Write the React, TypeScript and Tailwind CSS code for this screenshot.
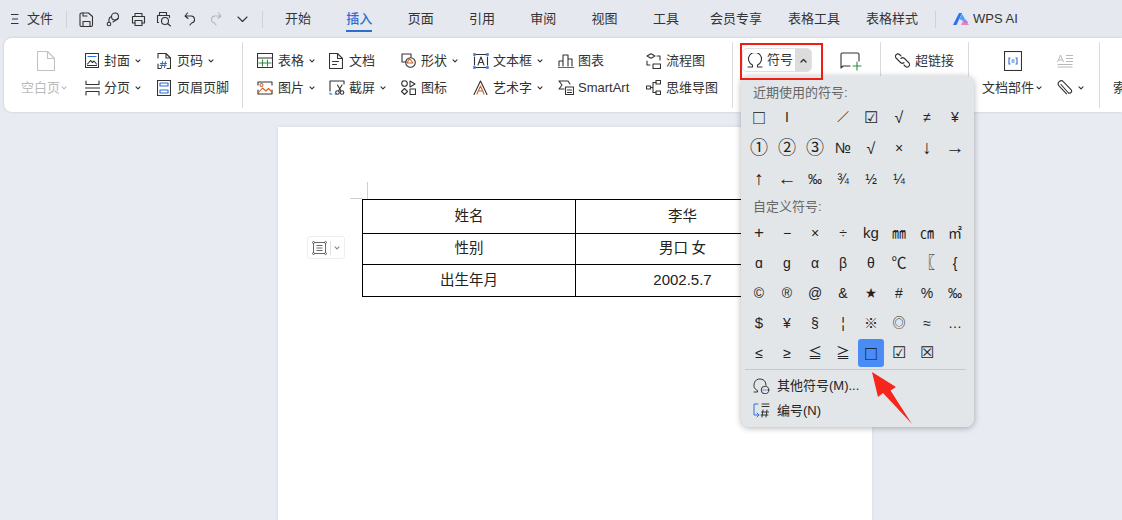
import React from "react";

const S = { fill: "none", stroke: "#333", strokeWidth: 1.1, strokeLinecap: "round", strokeLinejoin: "round" } as const;
const BLUE = "#2f6fd8";

function Ico({ w = 16, h = 16, vb, children, className = "" }: { w?: number; h?: number; vb?: string; children: React.ReactNode; className?: string }) {
  return (
    <svg width={w} height={h} viewBox={vb ?? `0 0 ${w} ${h}`} {...S} className={`shrink-0 ${className}`}>
      {children}
    </svg>
  );
}

function Chev({ color = "#333" }: { color?: string }) {
  return (
    <svg width="6" height="4" viewBox="0 0 7 5" fill="none" stroke={color} strokeWidth="1.4" strokeLinecap="round" strokeLinejoin="round" className="shrink-0">
      <path d="M1 1l2.500 2.500L6 1" />
    </svg>
  );
}

function Item({ icon, label, chev, iconW = 20 }: { icon: React.ReactNode; label: string; chev?: boolean; iconW?: number }) {
  return (
    <div className="h-[27px] flex items-center whitespace-nowrap">
      <div className="flex items-center" style={{ width: iconW }}>{icon}</div>
      <span>{label}</span>
      {chev && <span className="ml-[5px] flex"><Chev /></span>}
    </div>
  );
}

function Col({ w, children }: { w: string; children: React.ReactNode }) {
  return <div className={`flex flex-col shrink-0 ${w}`}>{children}</div>;
}

function Divider() {
  return <div className="w-px h-[66px] bg-[#d9dadd] shrink-0 -mt-[5px]" />;
}

const tabs = ["开始", "插入", "页面", "引用", "审阅", "视图", "工具"];
const recent = ["□", "I", "", "／", "☑", "√", "≠", "¥", "①", "②", "③", "№", "√", "×", "↓", "→", "↑", "←", "‰", "¾", "½", "¼"];
const custom = ["+", "−", "×", "÷", "kg", "㎜", "㎝", "㎡", "ɑ", "ɡ", "α", "β", "θ", "℃", "〖", "{", "©", "®", "@", "&", "★", "#", "%", "‰", "$", "¥", "§", "¦", "※", "◎", "≈", "…", "≤", "≥", "≦", "≧", "□", "☑", "☒"];

const sizes: Record<string, string> = {
  "□": "text-[14px] font-bold text-[#111] font-['Noto_Sans_CJK_SC']",
  "①": "text-[18px]",
  "②": "text-[18px]",
  "③": "text-[18px]",
  "↓": "text-[19px]",
  "↑": "text-[19px]",
  "→": "text-[19px]",
  "←": "text-[19px]",
  "√": "text-[16px]",
  "／": "text-[12px]",
  "★": "text-[11px]",
  "☑": "text-[16px]",
  "☒": "text-[16px]",
  "〖": "text-[16px] font-bold",
  "℃": "text-[15px]",
  "◎": "text-[13px]",
  "+": "text-[17px]",
  "kg": "text-[15px]",
  "$": "text-[15px]",
  "№": "text-[15px]",
};

function Sym({ s, on }: { s: string; on?: boolean }) {
  return (
    <div className={`w-[28px] h-full flex items-center justify-center ${on ? "relative" : ""}`}>
      {on && <div className="absolute left-[1px] top-[1px] w-[26px] h-[28px] rounded-[3px] bg-[#4a8cf5]" />}
      <span className={`relative ${sizes[s] ?? ""}`}>{s}</span>
    </div>
  );
}

export default function App() {
  return (
    <div className="relative w-[1122px] h-[520px] overflow-hidden bg-[#e8ebf2] text-[#333] text-[13px]" style={{ fontFamily: '"Liberation Sans","Noto Sans CJK SC",sans-serif' }}>
      {/* title bar */}
      <div className="h-[38px] flex items-center bg-[#e5e8ef]">
        <svg width="8" height="10" viewBox="0 0 8 10" fill="none" stroke="#333" strokeWidth="1" className="ml-[11px] shrink-0">
          <path d="M0 .5h7.5M1 5h6M0 9.500h7.500" />
        </svg>
        <span className="ml-[8px]">文件</span>
        <div className="ml-[13px] w-px h-[17px] bg-[#cfd2d8]" />
        <Ico w={15} h={15} className="ml-[12px]">
          <path d="M2.500 1h7l4 3.500v8.500a1.500 1.500 0 0 1-1.500 1.500H2.500A1.500 1.500 0 0 1 1 13V2.500A1.500 1.500 0 0 1 2.500 1z" />
          <path d="M4 14.500V9.500h7v5M4 1v3h4" />
        </Ico>
        <Ico w={14} h={15} className="ml-[12px]">
          <circle cx="9" cy="4.500" r="3.500" />
          <circle cx="3" cy="12" r="1.800" />
          <path d="M3 10V7.500C3 6 4 5 5.500 4.500M12 6.500L7 10" />
        </Ico>
        <Ico w={15} h={15} className="ml-[11px]">
          <path d="M4 4V1.500h7V4M4 11H1.500V4.500h12V11H11" />
          <path d="M4 8.500h7v5H4z" />
        </Ico>
        <Ico w={16} h={16} className="ml-[10px]">
          <path d="M3.500 4V1.500h7V4M2.500 11.500h-1v-7h12v2" />
          <circle cx="9" cy="10" r="3.500" />
          <path d="M11.500 12.500L14.500 15" />
        </Ico>
        <Ico w={11} h={14} className="ml-[12px]">
          <path d="M3.500 1L1 4l3 2.500M1 4h5.500a3.500 3.500 0 0 1 1 7L6 13" />
        </Ico>
        <svg width="11" height="14" viewBox="0 0 11 14" fill="none" stroke="#b4b7bd" strokeWidth="1.100" strokeLinecap="round" strokeLinejoin="round" className="ml-[16px] shrink-0">
          <path d="M7.500 1L10 4 7 6.500M10 4H4.500a3.500 3.500 0 0 0-1 7L5 13" />
        </svg>
        <span className="ml-[15px] flex">
          <svg width="11" height="7" viewBox="0 0 11 7" fill="none" stroke="#333" strokeWidth="1.100" strokeLinecap="round" strokeLinejoin="round"><path d="M1 1l4.500 4.500L10 1" /></svg>
        </span>
        <div className="ml-[14px] w-px h-[17px] bg-[#cfd2d8]" />
        <div className="ml-[22px] flex items-center gap-[35.3px]">
          {tabs.map((t) => (
            <div key={t} className={`relative ${t === "插入" ? "text-[#2a6ed2] font-medium" : ""}`}>
              {t}
              {t === "插入" && <div className="absolute left-0 right-0 top-[21px] h-[2px] bg-[#2a6ed2]" />}
            </div>
          ))}
        </div>
        <div className="ml-[31px] flex items-center gap-[26px]">
          <span>会员专享</span>
          <span>表格工具</span>
          <span>表格样式</span>
        </div>
        <div className="ml-[17px] w-px h-[17px] bg-[#cfd2d8]" />
        <svg width="16" height="12" viewBox="0 0 16 12" className="ml-[17px] shrink-0">
          <path d="M0 12L6 0h3L3.500 12z" fill="#2f6ff0" />
          <path d="M6.500 6L9 1l3 5-2 2z" fill="#4aa3f5" />
          <path d="M8 12l2-4h3l3 4z" fill="#f47fb5" />
          <path d="M10 8l2-2 2 2 1 2h-3z" fill="#a07cf0" />
        </svg>
        <span className="ml-[4px]">WPS AI</span>
      </div>

      {/* ribbon */}
      <div className="ml-[4px] h-[74px] bg-white rounded-l-[8px] shadow-[0_0_3px_rgba(0,0,0,0.15)] flex pt-[9px] text-[#333]">
        <div className="w-[17px] shrink-0" />
        <Col w="w-[64px]">
          <div className="pl-[16px] h-[27px] flex items-center">
            <svg width="18" height="20" viewBox="0 0 18 20" fill="none" stroke="#c2c2c2" strokeWidth="1.100" strokeLinejoin="round"><path d="M.5.500h10l7 7v12H.5zM10.500.500v7h7" /></svg>
          </div>
          <div className="h-[27px] flex items-center text-[#bbbbbb] whitespace-nowrap">
            空白页<span className="ml-[1px] flex"><Chev color="#bbb" /></span>
          </div>
        </Col>
        <Col w="w-[72px]">
          <Item label="封面" chev iconW={19} icon={
            <Ico w={14} h={15}><rect x=".5" y=".5" width="13" height="14" /><path d="M3 3.500h8" stroke={BLUE} /><path d="M2.500 11l3-3.500 2 2 1.500-1.500 2.500 3M2.500 12.500h9" /></Ico>
          } />
          <Item label="分页" chev iconW={19} icon={
            <Ico w={15} h={16}><path d="M1 1v3.500h13V1M0 8h15M1 15v-3.500h13V15" /></Ico>
          } />
        </Col>
        <Col w="w-[85px]">
          <Item label="页码" chev icon={
            <Ico w={14} h={16}><path d="M1 5V.500h8l4.500 4.500v10.500H10M4 15.500H1V11M9 .500V5h4.500" /><path d="M5.500 8.500l-1 6M8.500 8.500l-1 6M3.500 10.500h6M3 12.500h6" stroke={BLUE} /></Ico>
          } />
          <Item label="页眉页脚" icon={
            <Ico w={14} h={16}><rect x=".5" y=".5" width="13" height="15" /><path d="M3 3h8v3H3zM3 10h8v3H3z" stroke={BLUE} /></Ico>
          } />
        </Col>
        <Divider />
        <div className="w-[14px] shrink-0" />
        <Col w="w-[72px]">
          <Item label="表格" chev iconW={21} icon={
            <Ico w={16} h={15}><rect x=".5" y=".5" width="15" height="14" /><path d="M.5 5h15" /><path d="M2 10h12M5.500 7v6M10.500 7v6" stroke="#2d8a3e" /></Ico>
          } />
          <Item label="图片" chev iconW={21} icon={
            <Ico w={16} h={14}><path d="M1 4V1h14v3M15 9v4H1V9" /><circle cx="4.500" cy="4" r="1.500" stroke="#d2622a" /><path d="M1 12l4.500-5 3.500 3 2.500-2.500L15 11" stroke="#d2622a" /></Ico>
          } />
        </Col>
        <Col w="w-[72px]">
          <Item label="文档" iconW={20} icon={
            <Ico w={14} h={16}><path d="M.5.500h8l5 5v10H.5zM8.500.500v5h5M3.500 8.500h6M3.500 11.500h4" /></Ico>
          } />
          <Item label="截屏" chev iconW={20} icon={
            <Ico w={16} h={15}><path d="M1 11V1h14v3" /><path d="M1 13v1h2" stroke={BLUE} /><path d="M6 14h1" stroke={BLUE} /><circle cx="8.500" cy="12.500" r="1.800" /><circle cx="13" cy="12.500" r="1.800" /><path d="M9.500 11L13 5M12 11L8.500 5" /></Ico>
          } />
        </Col>
        <Col w="w-[72px]">
          <Item label="形状" chev iconW={20} icon={
            <Ico w={15} h={15}><path d="M5 9H1V1h9v3" /><circle cx="9.500" cy="9.500" r="4.800" /><path d="M6 10l2.500-4.500 3.500 4.500z" stroke="#d2622a" /></Ico>
          } />
          <Item label="图标" iconW={20} icon={
            <Ico w={15} h={15}><circle cx="3.500" cy="3.500" r="2.800" /><path d="M9 1l5 3-5 3z" /><path d="M3.500 8.500l3 3-3 3-3-3z" /><rect x="9" y="9" width="5.500" height="5.500" /></Ico>
          } />
        </Col>
        <Col w="w-[85px]">
          <Item label="文本框" chev iconW={20} icon={
            <Ico w={16} h={16}><path d="M3 1.500h10M3 14.500h10M1.500 4v8M14.500 4v8" /><path d="M5 12l3-8 3 8M6 9.500h4" /><path d="M.5 .5h2v2h-2zM13.500 .5h2v2h-2zM.5 13.500h2v2h-2zM13.500 13.500h2v2h-2z" fill={BLUE} stroke={BLUE} strokeWidth=".5" /></Ico>
          } />
          <Item label="艺术字" chev iconW={20} icon={
            <Ico w={15} h={15}><path d="M1 14.500L7.500 1 14 14.500" /><path d="M4 14l3.500-8L11 14M5 11h5" stroke="#d2622a" /></Ico>
          } />
        </Col>
        <Col w="w-[88px]">
          <Item label="图表" iconW={20} icon={
            <Ico w={16} h={15}><path d="M1 13V8h4v5M5 8V2h5v11M10 6h4v7" /><path d="M0 14.500h16" stroke="#2d8a3e" /></Ico>
          } />
          <Item label="SmartArt" iconW={20} icon={
            <Ico w={16} h={15}><path d="M1 1h9l2 3M1 1l3 4-3 4h5" /><rect x="7.500" y="7" width="8" height="7.500" /><path d="M9.500 10h4M9.500 12.500h4" /></Ico>
          } />
        </Col>
        <Col w="w-[86px]">
          <Item label="流程图" iconW={20} icon={
            <Ico w={15} h={16}><path d="M5 .8L9 3 5 5.200 1 3zM11 3h3v4M1 8v4h3" /><rect x="7" y="11" width="7.500" height="4.500" /></Ico>
          } />
          <Item label="思维导图" iconW={20} icon={
            <Ico w={15} h={15}><rect x="10" y=".5" width="4.500" height="3.500" /><rect x="10" y="11" width="4.500" height="3.500" /><rect x=".5" y="6" width="4" height="3" /><path d="M4.500 7.500H7M7 2.500h3M7 12.500h3M7 2.500v10" /></Ico>
          } />
        </Col>
        <Divider />
        {/* symbol */}
        <div className="w-[147px] shrink-0 flex pl-[9px]">
          <div className="h-[24px] mt-[1px] w-[70px] shrink-0 rounded-[5px] border border-[#e2e2e2] flex items-center overflow-hidden">
            <div className="flex-1 flex items-center pl-[4px]">
              <svg width="16" height="15" viewBox="0 0 16 15" fill="none" stroke="#333" strokeWidth="1.100" strokeLinecap="round" strokeLinejoin="round" className="shrink-0">
                <path d="M1 14h4.500v-2A6.500 6.500 0 1 1 10.500 12v2H15" />
              </svg>
              <span className="ml-[4px]">符号</span>
            </div>
            <div className="w-[16px] h-full bg-[#dcdcdc] flex items-center justify-center">
              <svg width="7" height="5" viewBox="0 0 7 5" fill="none" stroke="#333" strokeWidth="1.400" strokeLinecap="round" strokeLinejoin="round"><path d="M1 4l2.500-2.500L6 4" /></svg>
            </div>
          </div>
          <div className="ml-[28px] mt-[5px]">
            <svg width="22" height="19" viewBox="0 0 22 19" fill="none" stroke="#333" strokeWidth="1.100" strokeLinecap="round" strokeLinejoin="round">
              <path d="M10 14H3l-2 2V2.500A1.500 1.500 0 0 1 2.500 1h15A1.500 1.500 0 0 1 19 2.500V9" />
              <path d="M17 10v8M13 14h8" stroke="#2d8a3e" />
            </svg>
          </div>
        </div>
        <Divider />
        <div className="w-[14px] shrink-0" />
        <Col w="w-[73px]">
          <Item label="超链接" iconW={20} icon={
            <Ico w={15} h={15}><path d="M6 3L4.500 1.500a2.500 2.500 0 0 0-3.500 3.500L5.500 9.500a2.500 2.500 0 0 0 3.500 0" /><path d="M9 12l1.500 1.500a2.500 2.500 0 0 0 3.500-3.500L9.500 5.500a2.500 2.500 0 0 0-3.500 0" /></Ico>
          } />
          <div />
        </Col>
        <Divider />
        <div className="w-[13px] shrink-0" />
        <Col w="w-[75px]">
          <div className="pl-[22px] h-[27px] flex items-center">
            <svg width="18" height="20" viewBox="0 0 18 20" fill="none" stroke="#333" strokeWidth="1.100"><rect x=".5" y=".5" width="17" height="19" /><path d="M6.500 7H5v6h1.500M11.500 7H13v6h-1.500" stroke={BLUE} /><path d="M7.500 9h3M7.500 11h3" stroke={BLUE} /></svg>
          </div>
          <div className="h-[27px] flex items-center whitespace-nowrap">文档部件<span className="ml-[2px] flex"><Chev /></span></div>
        </Col>
        <Col w="w-[42px]">
          <div className="h-[27px] flex items-center">
            <svg width="16" height="14" viewBox="0 0 16 14" fill="none" stroke="#b8b8b8" strokeWidth="1"><path d="M.5 8l3-7 3 7M1.500 6h4M9 1.500h7M9 4.500h7M9 7.500h7M.5 10.500h15M.5 13h15" /></svg>
          </div>
          <div className="h-[27px] flex items-center">
            <Ico w={16} h={16}><path d="M4 4.500l7 8a2 2 0 0 0 3-2.800L6.500 1.800a3 3 0 0 0-4.500 4l7.500 8" /></Ico>
            <span className="ml-[5px] flex"><Chev /></span>
          </div>
        </Col>
        <Divider />
        <div className="pl-[13px] mt-[27px] h-[27px] flex items-center whitespace-nowrap">索</div>
      </div>

      {/* page */}
      <div className="relative ml-[278px] mt-[15px] w-[594px] h-[400px] bg-white pt-[72px] pl-[84px] shadow-[0_0_4px_rgba(0,0,0,0.08)]" style={{ fontFamily: '"Liberation Serif","Noto Sans CJK SC",serif' }}>
        <div className="absolute left-[89px] top-[55px] w-px h-[17px] bg-[#cfcfcf]" />
        <div className="absolute left-[72px] top-[71px] w-[12px] h-px bg-[#cfcfcf]" />
        <div className="absolute left-[29px] top-[109px] w-[38px] h-[23px] rounded-[3px] border border-[#eeeeee] bg-white flex items-center pl-[4px]">
          <svg width="15" height="14" viewBox="0 0 15 14" fill="none" stroke="#444" strokeWidth=".8">
            <rect x="1.500" y="1.500" width="12" height="11" />
            <path d="M4.500 4.500h6M4.500 7h6M4.500 9.500h6" />
            <circle cx="1.500" cy="1.500" r="1" fill="#fff" /><circle cx="13.500" cy="1.500" r="1" fill="#fff" /><circle cx="1.500" cy="12.500" r="1" fill="#fff" /><circle cx="13.500" cy="12.500" r="1" fill="#fff" />
          </svg>
          <div className="ml-[3px] w-px h-[14px] bg-[#e0e0e0]" />
          <span className="ml-[3px] flex"><Chev color="#888" /></span>
        </div>
        <table className="border-collapse text-[14.500px] text-[#222] text-center">
          <tbody>
            <tr className="h-[34px]">
              <td className="w-[213px] border border-black p-0">姓名</td>
              <td className="w-[214px] border border-black p-0">李华</td>
            </tr>
            <tr className="h-[31px]">
              <td className="border border-black p-0">性别</td>
              <td className="border border-black p-0">男口 女</td>
            </tr>
            <tr className="h-[32px]">
              <td className="border border-black p-0">出生年月</td>
              <td className="border border-black p-0 text-[15px]" style={{ fontFamily: '"Liberation Sans",sans-serif' }}>2002.5.7</td>
            </tr>
          </tbody>
        </table>
      </div>

      {/* symbol menu */}
      <div className="absolute left-[741px] top-[76px] w-[233px] h-[351px] rounded-[8px] bg-[#e3e6e9] shadow-[0_1px_6px_rgba(0,0,0,0.3)] pl-[4px] text-[#222]">
        <div className="mt-[8px] h-[18px] pl-[8px] flex items-center text-[13px] text-[#666]">近期使用的符号:</div>
        <div className="grid grid-cols-[repeat(8,28px)] auto-rows-[31px] text-[14px]">
          {recent.map((s, i) => <Sym key={i} s={s} />)}
        </div>
        <div className="mt-[3px] h-[18px] pl-[8px] flex items-center text-[13px] text-[#666]">自定义符号:</div>
        <div className="mt-[2px] grid grid-cols-[repeat(8,28px)] auto-rows-[30px] text-[14px]">
          {custom.map((s, i) => <Sym key={i} s={s} on={i === 36} />)}
        </div>
        <div className="mr-[8px] h-px bg-[#c6c9cc] mt-[1px]" />
        <div className="h-[25px] mt-[3px] flex items-center pl-[8px]">
          <svg width="17" height="16" viewBox="0 0 17 16" fill="none" stroke="#333" strokeWidth="1" strokeLinecap="round" strokeLinejoin="round" className="shrink-0">
            <path d="M1 14h3.500v-1.500A6 6 0 1 1 13 7" />
            <circle cx="12" cy="12" r="3.800" />
            <path d="M10 12h.5M12 12h.5M14 12h.5" stroke={BLUE} />
          </svg>
          <span className="ml-[7px]">其他符号(M)...</span>
        </div>
        <div className="h-[25px] flex items-center pl-[8px]">
          <svg width="17" height="15" viewBox="0 0 17 15" fill="none" stroke="#333" strokeWidth="1" strokeLinecap="round" strokeLinejoin="round" className="shrink-0">
            <path d="M5 1H1v11h5M4 10l2 2-2 2" stroke={BLUE} />
            <path d="M9 1h7M9 3.500h7M10 7l-1 7M14 7l-1 7M8.500 9h7M8 12h7" />
          </svg>
          <span className="ml-[7px]">编号(N)</span>
        </div>
      </div>

      {/* red highlight */}
      <div className="absolute left-[740px] top-[43px] w-[83px] h-[37px] border-2 border-[#f01d12] pointer-events-none" />

      {/* red arrow */}
      <svg width="50" height="60" viewBox="0 0 50 60" className="absolute left-[868px] top-[368px]" fill="#f5271c">
        <path d="M4 4L28 19L22.500 22.500L44 56L15 25L10 29z" />
      </svg>
    </div>
  );
}
